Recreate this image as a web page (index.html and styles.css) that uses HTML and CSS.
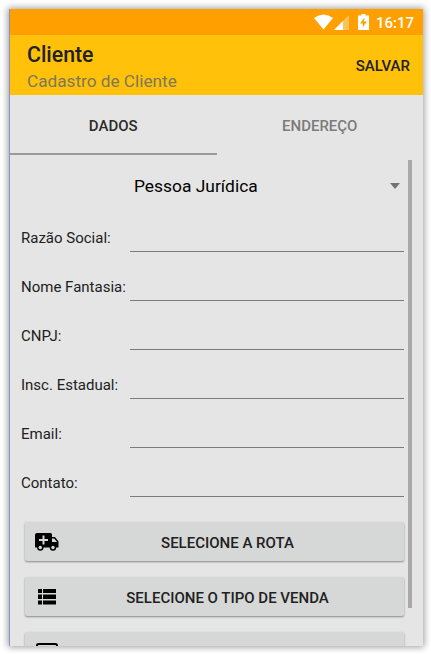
FILE: index.html
```html
<!DOCTYPE html>
<html lang="pt-BR">

<head>
    <meta charset="UTF-8">
    <meta name="viewport" content="width=device-width, initial-scale=1.0">
    <title>Cadastro de Cliente</title>
    <link rel="stylesheet" href="styles.css">
</head>

<body>
    <main class="phone">
        <!--Barra de status-->
        <div class="status">
            <svg class="wifi" width="19" height="16" viewBox="0 0 19 16">
                <path d="M0 4 Q9.500 -3 19 4 L9.500 15.500 Z" fill="#fff" />
            </svg>
            <svg class="signal" width="15" height="15" viewBox="0 0 15 15">
                <path d="M15 0 V15 H0 Z" fill="#fff" fill-opacity=".35" />
                <path d="M9 6 V15 H0 Z" fill="#fff" />
            </svg>
            <svg class="battery" width="11" height="16" viewBox="0 0 11 16">
                <path d="M3.500 0 H7.500 V1.500 H11 V16 H0 V1.500 H3.500 Z" fill="#fff" />
                <path d="M6.500 3.500 L2 9.500 H5 L4.500 13.500 L9 7.500 H6 Z" fill="#ffa000" />
            </svg>
            <span class="clock">16:17</span>
        </div>

        <header class="toolbar">
            <div>
                <h1>Cliente</h1>
                <h2>Cadastro de Cliente</h2>
            </div>
            <button class="save">SALVAR</button>
        </header>

        <nav class="tabs">
            <button class="tab active">DADOS</button>
            <button class="tab">ENDEREÇO</button>
        </nav>

        <!--Formulario-->
        <form class="content">
            <div class="spinner">
                <span>Pessoa Jurídica</span>
                <i class="arrow"></i>
            </div>

            <div class="field">
                <label for="razao">Razão Social:</label>
                <input id="razao">
            </div>
            <div class="field">
                <label for="fantasia">Nome Fantasia:</label>
                <input id="fantasia">
            </div>
            <div class="field">
                <label for="cnpj">CNPJ:</label>
                <input id="cnpj">
            </div>
            <div class="field">
                <label for="insc">Insc. Estadual:</label>
                <input id="insc">
            </div>
            <div class="field">
                <label for="email">Email:</label>
                <input id="email">
            </div>
            <div class="field">
                <label for="contato">Contato:</label>
                <input id="contato">
            </div>

            <div class="actions">
                <button type="button" class="action">
                    <svg width="24" height="18" viewBox="0 0 24 18">
                        <path fill-rule="evenodd" d="M2 0 H15.500 Q17 0 17 1.500 V4 H20 L23.500 8.500 V14.500 H0 V2 Q0 0 2 0 Z M7.500 2.500 V6 H4 V8 H7.500 V11.500 H9.500 V8 H13 V6 H9.500 V2.500 Z M17 5.500 V9 H22 L19.300 5.500 Z" />
                        <circle cx="5.300" cy="14.500" r="3.200" />
                        <circle cx="18" cy="14.500" r="3.200" />
                        <circle cx="5.300" cy="14.500" r="1.700" fill="#d6d7d7" />
                        <circle cx="18" cy="14.500" r="1.700" fill="#d6d7d7" />
                    </svg>
                    <span>SELECIONE A ROTA</span>
                </button>
                <button type="button" class="action">
                    <svg width="24" height="16" viewBox="0 0 24 16">
                        <path d="M3 0 h4 v4 h-4z M8 0 h13 v4 h-13z M3 5.500 h4 v4.500 h-4z M8 5.500 h13 v4.500 h-13z M3 11.500 h4 v4 h-4z M8 11.500 h13 v4 h-13z" />
                    </svg>
                    <span>SELECIONE O TIPO DE VENDA</span>
                </button>
                <button type="button" class="action">
                    <svg width="24" height="18" viewBox="0 0 24 18">
                        <rect x="2" y="1" width="20" height="16" rx="1.500" fill="none" stroke="#000" stroke-width="2" />
                    </svg>
                    <span></span>
                </button>
            </div>
            <i class="scrollbar"></i>
        </form>
    </main>
</body>

</html>
```

FILE: styles.css
```css
* {
    box-sizing: border-box;
}

body {
    margin: 0;
    padding: 9px 8px 8px 9px;
    height: 654px;
    overflow: hidden;
    background-color: #fff;
    font-family: Roboto, sans-serif;
    color: #212121;
}

.phone {
    display: flex;
    flex-direction: column;
    height: 637px;
    overflow: hidden;
    border-left: 1px solid #8c90c8;
    background-color: #e5e5e5;
    box-shadow: 0 0 7px 1px rgba(0, 0, 0, 0.4);
}

button {
    border: none;
    background: none;
    padding: 0;
    font-family: inherit;
    font-size: 15px;
    font-weight: 500;
    color: inherit;
}

.status {
    display: flex;
    flex-shrink: 0;
    align-items: center;
    justify-content: flex-end;
    height: 26px;
    padding-right: 9px;
    background-color: #ffa000;
}

.signal {
    margin: 1px 9px 0 1px;
}

.clock {
    width: 38px;
    margin-left: 7px;
    padding-top: 1px;
    font-size: 15px;
    font-weight: 500;
    color: #fff;
}

.toolbar {
    display: flex;
    flex-shrink: 0;
    align-items: center;
    justify-content: space-between;
    height: 60px;
    padding: 1px 13px 0 17px;
    background-color: #ffc10a;

    h1 {
        margin: 0;
        padding-top: 5px;
        font-size: 21.3px;
        font-weight: 500;
        line-height: 26px;
    }

    h2 {
        margin: 0;
        font-size: 17.2px;
        font-weight: 400;
        line-height: 26px;
        color: #7d7859;
    }
}

.tabs {
    display: flex;
    flex-shrink: 0;
    height: 60px;
}

.tab {
    flex: 1;
    padding-top: 3px;
    border-bottom: 2px solid transparent;
    color: #7b7b7b;

    &.active {
        border-bottom-color: #9b9b9b;
        color: #2b2b2b;
    }
}

.content {
    position: relative;
    flex: 1;
    padding: 7px 19px 0 11px;
}

.spinner {
    display: flex;
    align-items: center;
    justify-content: space-between;
    height: 48px;
    margin-bottom: 3px;
    padding: 0 4px 0 113px;
    font-size: 17.4px;
    color: #000;
}

.arrow {
    border: 5.5px solid transparent;
    border-top: 6px solid #737373;
    border-bottom: none;
}

.field {
    display: flex;
    align-items: center;
    height: 49px;

    label {
        width: 109px;
        font-size: 15px;
        white-space: nowrap;
    }

    input {
        flex: 1;
        min-width: 0;
        height: 29px;
        padding: 0;
        border: none;
        border-bottom: 1px solid #7b7b7b;
        outline: none;
        background: none;
    }
}

.actions {
    display: flex;
    flex-direction: column;
    gap: 16px;
    margin: 15px 0 0 4px;
}

.action {
    display: flex;
    align-items: center;
    height: 39px;
    padding: 0 10px;
    border-radius: 2px;
    background-color: #d6d7d7;
    box-shadow: 0 1px 2px rgba(0, 0, 0, 0.4);

    span {
        flex: 1;
        padding: 2px 0 0 2px;
    }
}

.scrollbar {
    position: absolute;
    top: 5px;
    right: 11px;
    width: 4px;
    height: 448px;
    background-color: #a8a8a8;
}
```
